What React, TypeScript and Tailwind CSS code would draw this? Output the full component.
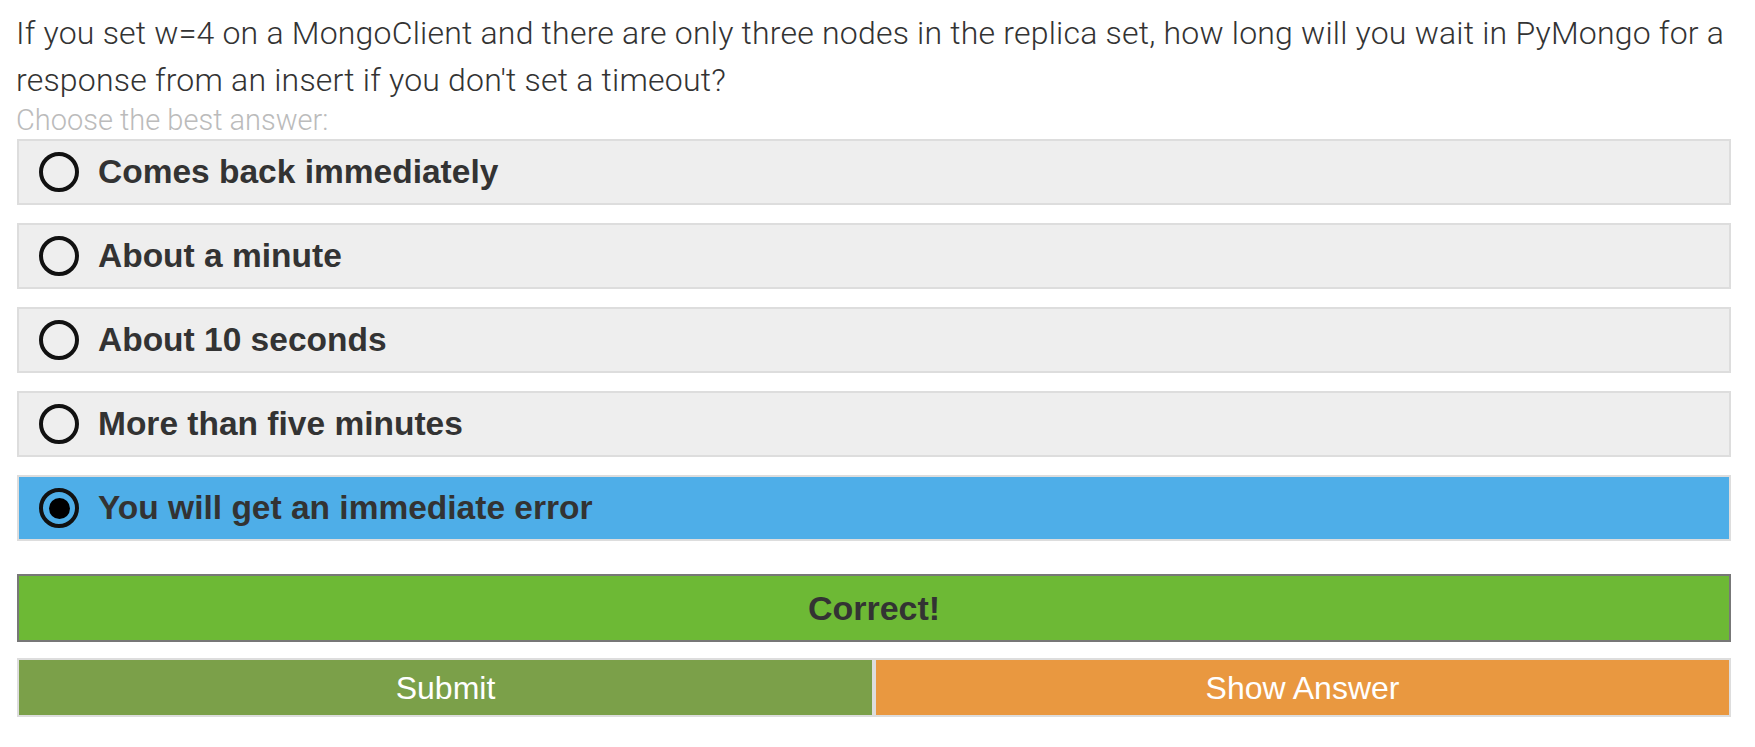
const options = [
    'Comes back immediately',
    'About a minute',
    'About 10 seconds',
    'More than five minutes',
    'You will get an immediate error',
];

const selected = 4;

function Radio({ checked }: { checked: boolean }) {
    return (
        <span className="flex h-[40px] w-[40px] shrink-0 items-center justify-center rounded-full border-[4px] border-[#111] blur-[0.4px]">
            {checked && <span className="h-[21px] w-[21px] rounded-full bg-black" />}
        </span>
    );
}

export default function App() {
    return (
        <div className="min-h-screen bg-white font-['Liberation_Sans',Arial,sans-serif] text-[#333]">
            <div className="ml-[17px] w-[1714px] pt-[10px]">
                <p className="-ml-[1px] font-['Roboto',sans-serif] text-[32px] font-light leading-[47px] tracking-[0.2px]">
                    If you set w=4 on a MongoClient and there are only three nodes in the replica set, how long will you
                    wait in PyMongo for a response from an insert if you don't set a timeout?
                </p>
                <p className="-ml-[1px] mt-[1px] font-['Roboto',sans-serif] text-[29px] font-light leading-[30px] text-[#bbb]">
                    Choose the best answer:
                </p>

                <div className="mt-[4px] flex flex-col gap-[18px]">
                    {options.map((label, i) => (
                        <div
                            key={label}
                            className={
                                i === selected
                                    ? 'flex h-[66px] items-center gap-[19px] border-2 border-[#ddd] bg-[#4eaee8] pl-[20px]'
                                    : 'flex h-[66px] items-center gap-[19px] border-2 border-[#ddd] bg-[#eee] pl-[20px]'
                            }
                        >
                            <Radio checked={i === selected} />
                            <span className="text-[33.5px] font-bold leading-none">{label}</span>
                        </div>
                    ))}
                </div>

                <div className="mt-[33px] flex h-[68px] items-center justify-center border-2 border-[#777] bg-[#6db935]">
                    <span className="text-[34px] font-bold leading-none">Correct!</span>
                </div>

                <div className="mt-[16px] flex h-[59px]">
                    <button className="flex flex-1 items-center justify-center border-2 border-[#ddd] bg-[#7ba049] text-[32px] leading-none text-white">
                        Submit
                    </button>
                    <button className="flex flex-1 items-center justify-center border-2 border-[#ddd] bg-[#e99840] text-[32px] leading-none text-white">
                        Show Answer
                    </button>
                </div>
            </div>
        </div>
    );
}
